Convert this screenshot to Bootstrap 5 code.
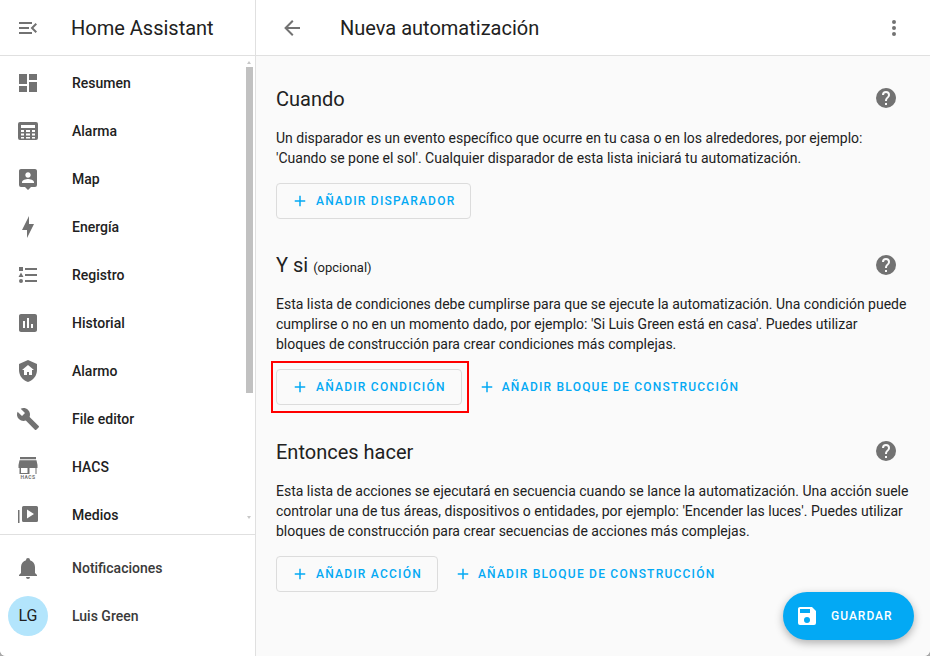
<!DOCTYPE html>
<html lang="es">
<head>
<meta charset="utf-8">
<title>Nueva automatización</title>
<link href="https://cdn.jsdelivr.net/npm/bootstrap@5.3.0/dist/css/bootstrap.min.css" rel="stylesheet">
<style>
html,body{height:100%;overflow:hidden}
body{font-family:Roboto,"Liberation Sans",sans-serif;color:#212121;background:#a8a8a8}
.ha-shell{width:930px;height:656px;overflow:hidden;position:relative;background:#fff;border-radius:0 0 6px 6px}
.ha-side{width:256px;border-right:1px solid #e0e0e0;background:#fff;flex:none}
.ha-head{height:56px;border-bottom:1px solid #e0e0e0;flex:none}
.ha-ico{width:24px;height:24px;fill:#727272;flex:none;display:block}
.ha-brand{font-size:20px;margin-left:31px;line-height:56px}
.ha-toggle{margin-left:16px}
.ha-scroll{height:478px;padding-top:3px;overflow:hidden;flex:none}
.ha-row{height:48px;padding-left:16px;font-size:14px;font-weight:500;color:#212121}
.ha-row span.ha-lbl{margin-left:32px}
.ha-bottom{border-top:1px solid #e0e0e0;padding-top:9px}
.ha-bottom .ha-lbl{color:#3a3a3a}
.ha-bar{position:absolute;left:246px;top:67px;width:7px;height:326px;background:#c1c1c1}
.ha-arr{position:absolute;left:247px;width:0;height:0;border-left:2.5px solid transparent;border-right:2.5px solid transparent}
.ha-arr-up{top:61px;border-bottom:3px solid #c8c8c8}
.ha-arr-dn{top:516px;border-top:3px solid #c8c8c8}
.ha-avatar{width:40px;height:40px;border-radius:50%;background:#b3e5fc;font-size:16px;font-weight:400;color:#212121;margin-left:-8px;margin-right:-8px}
.ha-main{background:#fafafa;min-width:0}
.ha-main .ha-head{background:#fff;padding:0 24px}
.ha-title{font-size:20px;margin-left:36px;line-height:56px;color:#212121}
.ha-sect{padding:0 32px 0 20px}
.ha-sect-a{margin-top:31px}
.ha-sect-b{margin-top:34px}
.ha-sect-c{margin-top:35px}
.ha-sect-top{margin-bottom:17px}
.ha-sect-a .ha-ico,.ha-sect-c .ha-ico{margin-top:-2px}
.ha-sect-h{height:24px;font-size:20px;font-weight:400;line-height:24px;margin:0}
.ha-opt{font-size:13px}
.ha-txt{font-size:14px;line-height:20px;color:#212121;margin:0 -12px 15px 0}
.ha-btn{height:36px;font-size:12px;font-weight:500;letter-spacing:1.22px;color:#03a9f4;background:transparent;border:1px solid transparent;border-radius:4px;padding:0 15px 0 14px;display:inline-flex;align-items:center;white-space:nowrap}
.ha-btn:hover{color:#03a9f4;border-color:transparent}
.ha-btn.ha-outl{border-color:#dcdcdc}
.ha-btn.ha-outl:hover{border-color:#dcdcdc}
.ha-btn svg{width:18px;height:18px;fill:#03a9f4;margin-right:7px;flex:none}
.ha-btn.ha-plain{padding-left:0;margin-left:15px}
.ha-btn.ha-plain svg{margin-right:6px}
.ha-mark{position:absolute;top:-8px;left:-5px;right:-7px;bottom:-8px;border:2px solid #f00;pointer-events:none}
.ha-fab{position:absolute;left:783px;top:592px;width:131px;height:48px;border-radius:24px;background:#03a9f4;color:#fff;font-size:12px;font-weight:500;letter-spacing:1px;border:0;padding:0 0 0 12px;box-shadow:0 3px 8px rgba(0,0,0,.3)}
.ha-fab svg{width:24px;height:24px;fill:#fff;margin-right:12px}
</style>
</head>
<body>
<div class="ha-shell d-flex">
  <aside class="ha-side d-flex flex-column">
    <div class="ha-head d-flex align-items-center">
      <svg class="ha-ico ha-toggle" viewBox="0 0 24 24"><path d="M21,15.61L19.59,17L14.58,12L19.59,7L21,8.39L17.44,12L21,15.61M3,6H16V8H3V6M3,13V11H13V13H3M3,18V16H16V18H3Z"/></svg>
      <div class="ha-brand">Home Assistant</div>
    </div>
    <div class="ha-scroll">
      <div class="ha-row d-flex align-items-center"><svg class="ha-ico" viewBox="0 0 24 24"><path d="M13,3V9H21V3M13,21H21V11H13M3,21H11V15H3M3,13H11V3H3V13Z"/></svg><span class="ha-lbl">Resumen</span></div>
      <div class="ha-row d-flex align-items-center"><svg class="ha-ico" viewBox="0 0 24 24"><path fill-rule="evenodd" d="M4 3H20A2 2 0 0 1 22 5V19A2 2 0 0 1 20 21H4A2 2 0 0 1 2 19V5A2 2 0 0 1 4 3ZM5 6V9H19V6ZM5 11V13H8V11ZM10 11V13H14V11ZM16 11V13H19V11ZM5 14.500V16.500H8V14.500ZM10 14.500V16.500H14V14.500ZM16 14.500V16.500H19V14.500ZM10 18V19.500H14V18ZM5 18V19.500H8V18ZM16 18V19.500H19V18Z"/></svg><span class="ha-lbl">Alarma</span></div>
      <div class="ha-row d-flex align-items-center"><svg class="ha-ico" viewBox="0 0 24 24"><path d="M18,16H6V15.1C6,13.1 10,12 12,12C14,12 18,13.1 18,15.1M12,5.3C13.5,5.3 14.7,6.5 14.7,8C14.7,9.5 13.5,10.7 12,10.7C10.5,10.7 9.3,9.5 9.3,8C9.3,6.5 10.5,5.3 12,5.3M19,2H5C3.89,2 3,2.89 3,4V18A2,2 0 0,0 5,20H9L12,23L15,20H19A2,2 0 0,0 21,18V4C21,2.89 20.1,2 19,2Z"/></svg><span class="ha-lbl">Map</span></div>
      <div class="ha-row d-flex align-items-center"><svg class="ha-ico" viewBox="0 0 24 24"><path d="M11 15H6L13 1V9H18L11 23V15Z"/></svg><span class="ha-lbl">Energía</span></div>
      <div class="ha-row d-flex align-items-center"><svg class="ha-ico" viewBox="0 0 24 24"><path d="M5,9.5L7.5,14H2.5L5,9.5M3,4H7V8H3V4M5,20A2,2 0 0,0 7,18A2,2 0 0,0 5,16A2,2 0 0,0 3,18A2,2 0 0,0 5,20M9,5V7H21V5H9M9,19H21V17H9V19M9,13H21V11H9V13Z"/></svg><span class="ha-lbl">Registro</span></div>
      <div class="ha-row d-flex align-items-center"><svg class="ha-ico" viewBox="0 0 24 24"><path d="M9 17H7V10H9V17M13 17H11V7H13V17M17 17H15V13H17V17M19 3H5C3.9 3 3 3.9 3 5V19C3 20.1 3.9 21 5 21H19C20.1 21 21 20.1 21 19V5C21 3.9 20.1 3 19 3Z"/></svg><span class="ha-lbl">Historial</span></div>
      <div class="ha-row d-flex align-items-center"><svg class="ha-ico" viewBox="0 0 24 24"><path d="M11,13H13V16H16V11H18L12,6L6,11H8V16H11V13M12,1L21,5V11C21,16.55 17.16,21.74 12,23C6.84,21.74 3,16.55 3,11V5L12,1Z"/></svg><span class="ha-lbl">Alarmo</span></div>
      <div class="ha-row d-flex align-items-center"><svg class="ha-ico" viewBox="0 0 24 24"><path d="M22.7,19L13.6,9.9C14.5,7.6 14,4.9 12.1,3C10.1,1 7.1,0.6 4.7,1.7L9,6L6,9L1.6,4.7C0.4,7.1 0.9,10.1 2.9,12.1C4.8,14 7.5,14.5 9.8,13.6L18.9,22.7C19.3,23.1 19.9,23.1 20.3,22.7L22.6,20.4C23.1,20 23.1,19.3 22.7,19Z"/></svg><span class="ha-lbl">File editor</span></div>
      <div class="ha-row d-flex align-items-center"><svg class="ha-ico" viewBox="0 0 24 24"><path fill-rule="evenodd" d="M4 2H20V4.200H4ZM3.500 5.200H20.500L21.500 10V13H20.500V19H3.500V13H2.500V10ZM5 13V18H11.500V13ZM13.500 13V19H19.500V13Z"/><text x="12" y="24" font-size="5" font-weight="700" text-anchor="middle" fill="#727272" font-family="Roboto,sans-serif" letter-spacing=".4">HACS</text></svg><span class="ha-lbl">HACS</span></div>
      <div class="ha-row d-flex align-items-center"><svg class="ha-ico" viewBox="0 0 24 24"><path fill-rule="evenodd" d="M2 7H3.500V20H2ZM7.500 3H20.500A1.500 1.500 0 0 1 22 4.500V17.500A1.500 1.500 0 0 1 20.500 19H7.500A1.500 1.500 0 0 1 6 17.500V4.500A1.500 1.500 0 0 1 7.500 3ZM11 6.500V15.500L18 11Z"/></svg><span class="ha-lbl">Medios</span></div>
    </div>
    <div class="ha-bottom flex-grow-1">
      <div class="ha-row d-flex align-items-center"><svg class="ha-ico" viewBox="0 0 24 24"><path d="M21,19V20H3V19L5,17V11C5,7.9 7.03,5.17 10,4.29C10,4.19 10,4.1 10,4A2,2 0 0,1 12,2A2,2 0 0,1 14,4C14,4.1 14,4.19 14,4.29C16.97,5.17 19,7.9 19,11V17L21,19M14,21A2,2 0 0,1 12,23A2,2 0 0,1 10,21"/></svg><span class="ha-lbl">Notificaciones</span></div>
      <div class="ha-row d-flex align-items-center"><div class="ha-avatar d-flex align-items-center justify-content-center">LG</div><span class="ha-lbl">Luis Green</span></div>
    </div>
  </aside>
  <main class="ha-main flex-grow-1 d-flex flex-column">
    <header class="ha-head d-flex align-items-center">
      <svg class="ha-ico" viewBox="0 0 24 24"><path d="M20,11V13H8L13.5,18.5L12.08,19.92L4.16,12L12.08,4.08L13.5,5.5L8,11H20Z"/></svg>
      <div class="ha-title flex-grow-1">Nueva automatización</div>
      <svg class="ha-ico" viewBox="0 0 24 24"><path d="M12,16A2,2 0 0,1 14,18A2,2 0 0,1 12,20A2,2 0 0,1 10,18A2,2 0 0,1 12,16M12,10A2,2 0 0,1 14,12A2,2 0 0,1 12,14A2,2 0 0,1 10,12A2,2 0 0,1 12,10M12,4A2,2 0 0,1 14,6A2,2 0 0,1 12,8A2,2 0 0,1 10,6A2,2 0 0,1 12,4Z"/></svg>
    </header>
    <section class="ha-sect ha-sect-a">
      <div class="ha-sect-top d-flex justify-content-between align-items-center">
        <h2 class="ha-sect-h">Cuando</h2>
        <svg class="ha-ico" viewBox="0 0 24 24"><path d="M15.07,11.25L14.17,12.17C13.45,12.89 13,13.5 13,15H11V14.5C11,13.39 11.45,12.39 12.17,11.67L13.41,10.41C13.78,10.05 14,9.55 14,9C14,7.89 13.1,7 12,7A2,2 0 0,0 10,9H8A4,4 0 0,1 12,5A4,4 0 0,1 16,9C16,9.88 15.64,10.67 15.07,11.25M13,19H11V17H13M12,2A10,10 0 0,0 2,12A10,10 0 0,0 12,22A10,10 0 0,0 22,12C22,6.47 17.5,2 12,2Z"/></svg>
      </div>
      <p class="ha-txt">Un disparador es un evento específico que ocurre en tu casa o en los alrededores, por ejemplo:<br>'Cuando se pone el sol'. Cualquier disparador de esta lista iniciará tu automatización.</p>
      <div class="d-flex"><a class="btn ha-btn ha-outl" href="#"><svg viewBox="0 0 24 24"><path d="M19,13H13V19H11V13H5V11H11V5H13V11H19V13Z"/></svg>AÑADIR DISPARADOR</a></div>
    </section>
    <section class="ha-sect ha-sect-b">
      <div class="ha-sect-top d-flex justify-content-between align-items-center">
        <h2 class="ha-sect-h">Y si <span class="ha-opt">(opcional)</span></h2>
        <svg class="ha-ico" viewBox="0 0 24 24"><path d="M15.07,11.25L14.17,12.17C13.45,12.89 13,13.5 13,15H11V14.5C11,13.39 11.45,12.39 12.17,11.67L13.41,10.41C13.78,10.05 14,9.55 14,9C14,7.89 13.1,7 12,7A2,2 0 0,0 10,9H8A4,4 0 0,1 12,5A4,4 0 0,1 16,9C16,9.88 15.64,10.67 15.07,11.25M13,19H11V17H13M12,2A10,10 0 0,0 2,12A10,10 0 0,0 12,22A10,10 0 0,0 22,12C22,6.47 17.5,2 12,2Z"/></svg>
      </div>
      <p class="ha-txt">Esta lista de condiciones debe cumplirse para que se ejecute la automatización. Una condición puede<br>cumplirse o no en un momento dado, por ejemplo: 'Si Luis Green está en casa'. Puedes utilizar<br>bloques de construcción para crear condiciones más complejas.</p>
      <div class="d-flex">
        <div class="position-relative"><a class="btn ha-btn ha-outl" href="#"><svg viewBox="0 0 24 24"><path d="M19,13H13V19H11V13H5V11H11V5H13V11H19V13Z"/></svg>AÑADIR CONDICIÓN</a><div class="ha-mark"></div></div>
        <a class="btn ha-btn ha-plain" href="#"><svg viewBox="0 0 24 24"><path d="M19,13H13V19H11V13H5V11H11V5H13V11H19V13Z"/></svg>AÑADIR BLOQUE DE CONSTRUCCIÓN</a>
      </div>
    </section>
    <section class="ha-sect ha-sect-c">
      <div class="ha-sect-top d-flex justify-content-between align-items-center">
        <h2 class="ha-sect-h">Entonces hacer</h2>
        <svg class="ha-ico" viewBox="0 0 24 24"><path d="M15.07,11.25L14.17,12.17C13.45,12.89 13,13.5 13,15H11V14.5C11,13.39 11.45,12.39 12.17,11.67L13.41,10.41C13.78,10.05 14,9.55 14,9C14,7.89 13.1,7 12,7A2,2 0 0,0 10,9H8A4,4 0 0,1 12,5A4,4 0 0,1 16,9C16,9.88 15.64,10.67 15.07,11.25M13,19H11V17H13M12,2A10,10 0 0,0 2,12A10,10 0 0,0 12,22A10,10 0 0,0 22,12C22,6.47 17.5,2 12,2Z"/></svg>
      </div>
      <p class="ha-txt">Esta lista de acciones se ejecutará en secuencia cuando se lance la automatización. Una acción suele<br>controlar una de tus áreas, dispositivos o entidades, por ejemplo: 'Encender las luces'. Puedes utilizar<br>bloques de construcción para crear secuencias de acciones más complejas.</p>
      <div class="d-flex">
        <a class="btn ha-btn ha-outl" href="#"><svg viewBox="0 0 24 24"><path d="M19,13H13V19H11V13H5V11H11V5H13V11H19V13Z"/></svg>AÑADIR ACCIÓN</a>
        <a class="btn ha-btn ha-plain" href="#"><svg viewBox="0 0 24 24"><path d="M19,13H13V19H11V13H5V11H11V5H13V11H19V13Z"/></svg>AÑADIR BLOQUE DE CONSTRUCCIÓN</a>
      </div>
    </section>
  </main>
  <div class="ha-bar"></div>
  <div class="ha-arr ha-arr-up"></div>
  <div class="ha-arr ha-arr-dn"></div>
  <button class="btn ha-fab d-flex align-items-center" type="button"><svg viewBox="0 0 24 24"><path d="M15,9H5V5H15M12,19A3,3 0 0,1 9,16A3,3 0 0,1 12,13A3,3 0 0,1 15,16A3,3 0 0,1 12,19M17,3H5C3.89,3 3,3.9 3,5V19A2,2 0 0,0 5,21H19A2,2 0 0,0 21,19V7L17,3Z"/></svg>GUARDAR</button>
</div>
<script src="https://cdn.jsdelivr.net/npm/bootstrap@5.3.0/dist/js/bootstrap.bundle.min.js"></script>
</body>
</html>
